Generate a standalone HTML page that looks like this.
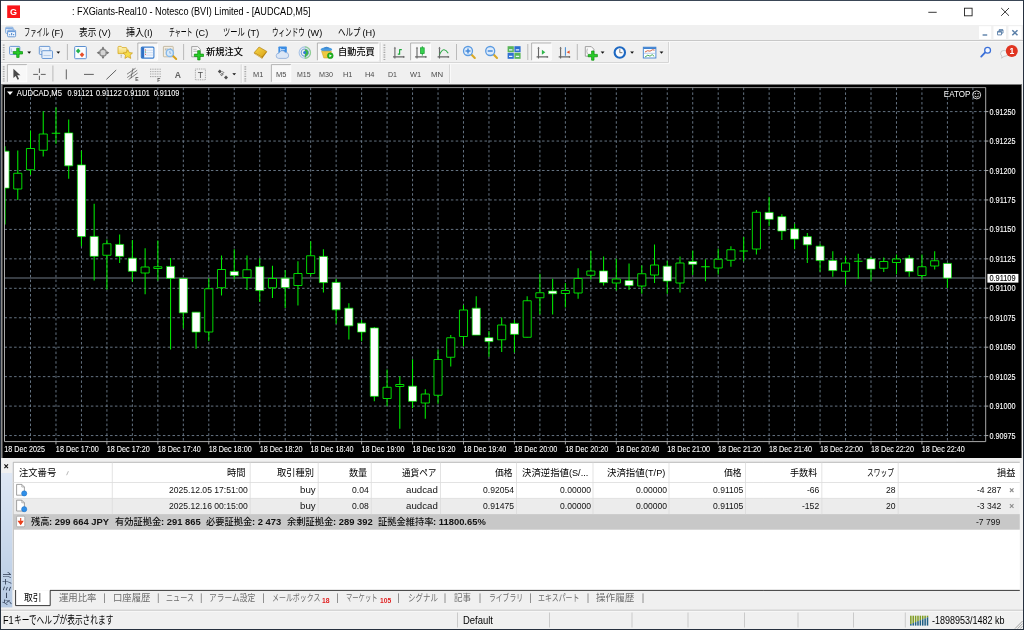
<!DOCTYPE html>
<html><head><meta charset="utf-8"><title>MT4</title>
<style>
html,body{margin:0;padding:0;}
body{width:1024px;height:630px;position:relative;overflow:hidden;background:#f0f0f0;font-family:"Liberation Sans", "Noto Sans CJK JP", sans-serif;}
.t{position:absolute;white-space:pre;display:block;will-change:transform;}
.t i{display:inline-block;font-style:normal;white-space:pre;vertical-align:baseline;}
.t b{display:inline-block;font-weight:inherit;transform-origin:0 50%;white-space:pre;}
svg{position:absolute;left:0;top:0;overflow:visible;will-change:transform}
svg text{font-family:"Liberation Sans", "Noto Sans CJK JP", sans-serif;}
</style></head><body>
<div style="position:absolute;left:0px;top:0px;width:1024px;height:24.7px;background:#ffffff;"></div>
<div style="position:absolute;left:0px;top:24.7px;width:1024px;height:15.8px;background:#f0f0f0;"></div>
<div style="position:absolute;left:0px;top:40.1px;width:1024px;height:1.0px;background:#c8c8c8;"></div>
<div style="position:absolute;left:0px;top:41.1px;width:1024px;height:0.7px;background:#f8f8f8;"></div>
<div style="position:absolute;left:0px;top:41.8px;width:1024px;height:42.2px;background:#f0f0f0;"></div>
<div style="position:absolute;left:0px;top:457px;width:1024px;height:173px;background:#f0f0f0;"></div>
<svg width="1024" height="630" viewBox="0 0 1024 630"><rect x="2.3" y="84.6" width="1019.3000000000001" height="373.4" fill="#000"/><path d="M4.5 111.60H985.7 M4.5 141.05H985.7 M4.5 170.50H985.7 M4.5 199.95H985.7 M4.5 229.40H985.7 M4.5 258.85H985.7 M4.5 288.30H985.7 M4.5 317.75H985.7 M4.5 347.20H985.7 M4.5 376.65H985.7 M4.5 406.10H985.7 M4.5 435.55H985.7 M30.50 87.6V441.6 M55.97 87.6V441.6 M81.44 87.6V441.6 M106.91 87.6V441.6 M132.38 87.6V441.6 M157.85 87.6V441.6 M183.32 87.6V441.6 M208.79 87.6V441.6 M234.26 87.6V441.6 M259.73 87.6V441.6 M285.20 87.6V441.6 M310.67 87.6V441.6 M336.14 87.6V441.6 M361.61 87.6V441.6 M387.08 87.6V441.6 M412.55 87.6V441.6 M438.02 87.6V441.6 M463.49 87.6V441.6 M488.96 87.6V441.6 M514.43 87.6V441.6 M539.90 87.6V441.6 M565.37 87.6V441.6 M590.84 87.6V441.6 M616.31 87.6V441.6 M641.78 87.6V441.6 M667.25 87.6V441.6 M692.72 87.6V441.6 M718.19 87.6V441.6 M743.66 87.6V441.6 M769.13 87.6V441.6 M794.60 87.6V441.6 M820.07 87.6V441.6 M845.54 87.6V441.6 M871.01 87.6V441.6 M896.48 87.6V441.6 M921.95 87.6V441.6 M947.42 87.6V441.6 M972.89 87.6V441.6" stroke="#778899" stroke-width="0.85" stroke-dasharray="2.5 2.3" fill="none"/><path d="M4.5 278H985.7" stroke="#7c8794" stroke-width="0.9" fill="none"/><clipPath id="cc"><rect x="4.5" y="87.6" width="981.2" height="354.0"/></clipPath><g clip-path="url(#cc)"><path d="M5.03 146.25V224.5 M17.77 150.5V200 M30.50 130.5V175 M43.23 111.25V156.5 M55.97 107.5V143.75 M51.72 133.25H60.22 M68.70 119.5V178.75 M81.44 150.75V246.25 M94.17 203.75V280.5 M106.91 239.5V289.5 M119.64 234.5V263 M132.38 240V281.5 M145.12 248.25V294.25 M157.85 240.5V280.5 M170.58 258V349.5 M183.32 278.5V328.25 M196.06 312.25V348.75 M208.79 278.25V341.25 M221.52 255.5V295.5 M234.26 249.25V279.5 M247.00 255.5V290 M259.73 258.25V302 M272.46 265.75V298 M285.20 270V308 M297.94 261.25V305.5 M310.67 241.25V275.75 M323.40 249.25V292.5 M336.14 278.75V323.75 M348.88 303.25V339.5 M361.61 320V341.25 M374.34 327V401.25 M387.08 369.5V406.25 M399.81 376.25V428.75 M412.55 359.25V408.25 M425.28 389.25V418.75 M438.02 349.5V403.75 M450.75 335V366.5 M463.49 305V346.5 M476.22 296.25V335 M488.96 331V356.75 M501.69 317.5V352 M514.43 320V352.5 M527.16 296.25V337.5 M539.90 273.75V314.5 M552.63 278.75V314.5 M565.37 283V307.5 M578.11 268.25V298.75 M590.84 250.75V279.5 M603.57 256.5V285.5 M616.31 258.75V290.5 M629.04 263.5V290 M641.78 265.5V293.75 M654.51 244.5V283 M667.25 260.75V293.75 M679.99 256.5V292.5 M692.72 250.5V275 M705.45 259.25V281.25 M701.20 266.75H709.70 M718.19 248.75V274.5 M730.92 246.25V266.75 M743.66 237V261.25 M739.41 251H747.91 M756.39 210V254.5 M769.13 196.75V226.25 M781.87 214.25V240 M794.60 223.75V249.25 M807.33 233V263 M820.07 243.75V271.75 M832.80 251.25V276.75 M845.54 256.25V285 M858.27 253.75V278.75 M854.02 261.25H862.52 M871.01 257V280.5 M883.75 257.5V272 M896.48 254.5V274.25 M909.21 255V276.75 M921.95 254.5V279.5 M934.68 251.25V269.5 M947.42 263.25V288" stroke="#00ee00" stroke-width="1.05" fill="none"/><path d="M13.71 173.25H21.82V189.0H13.71Z M26.45 148.5H34.55V169.75H26.45Z M39.19 134.0H47.28V150.25H39.19Z M102.86 243.75H110.96V255.25H102.86Z M141.06 267.0H149.17V273.0H141.06Z M153.80 266.75H161.90V268.5H153.80Z M204.74 288.75H212.84V332.0H204.74Z M217.47 269.5H225.57V287.75H217.47Z M242.94 269.75H251.05V277.5H242.94Z M268.41 278.5H276.51V287.75H268.41Z M293.88 273.5H301.99V285.5H293.88Z M306.62 255.75H314.72V273.5H306.62Z M383.03 387.25H391.13V398.5H383.03Z M395.76 384.5H403.87V386.5H395.76Z M421.23 394.0H429.33V403.0H421.23Z M433.97 359.5H442.07V395.25H433.97Z M446.70 337.75H454.81V357.25H446.70Z M459.44 310.0H467.54V336.5H459.44Z M497.64 325.0H505.75V339.75H497.64Z M523.12 300.75H531.21V337.25H523.12Z M535.85 292.75H543.95V297.75H535.85Z M561.32 290.5H569.42V293.5H561.32Z M574.06 278.5H582.15V293.0H574.06Z M586.79 271.0H594.89V275.25H586.79Z M612.26 279.0H620.36V283.0H612.26Z M637.73 273.75H645.83V286.0H637.73Z M650.47 265.0H658.56V275.0H650.47Z M675.94 263.0H684.03V283.0H675.94Z M714.14 259.25H722.24V268.0H714.14Z M726.88 249.75H734.97V260.25H726.88Z M752.35 212.25H760.44V249.0H752.35Z M841.49 263.0H849.59V271.25H841.49Z M879.70 261.5H887.79V268.25H879.70Z M892.43 259.0H900.53V262.5H892.43Z M917.90 266.75H926.00V275.5H917.90Z M930.63 260.75H938.73V266.0H930.63Z" stroke="#00ee00" stroke-width="0.9" fill="#000"/><path d="M0.98 151.15H9.08V188.1H0.98Z M64.66 132.9H72.75V165.85H64.66Z M77.39 164.9H85.49V236.6H77.39Z M90.12 236.4H98.22V256.35H90.12Z M115.59 244.4H123.69V256.35H115.59Z M128.33 258.15H136.43V271.35H128.33Z M166.53 266.4H174.63V278.35H166.53Z M179.27 278.4H187.37V312.85H179.27Z M192.00 312.15H200.11V332.1H192.00Z M230.21 271.4H238.31V275.6H230.21Z M255.68 266.65H263.78V290.6H255.68Z M281.15 278.15H289.25V287.6H281.15Z M319.35 256.4H327.45V282.6H319.35Z M332.09 282.4H340.19V309.85H332.09Z M344.82 308.15H352.93V325.85H344.82Z M357.56 323.15H365.66V332.1H357.56Z M370.29 327.9H378.39V396.35H370.29Z M408.50 386.15H416.60V401.35H408.50Z M472.17 308.15H480.27V335.1H472.17Z M484.91 337.65H493.01V341.6H484.91Z M510.38 323.4H518.48V334.35H510.38Z M548.59 291.0H556.68V293.75H548.59Z M599.52 270.9H607.62V282.6H599.52Z M625.00 280.4H633.09V285.6H625.00Z M663.20 266.15H671.30V281.1H663.20Z M688.67 261.5H696.77V264.25H688.67Z M765.08 212.4H773.18V219.35H765.08Z M777.82 216.65H785.91V231.1H777.82Z M790.55 228.9H798.65V239.1H790.55Z M803.28 236.65H811.38V244.85H803.28Z M816.02 246.15H824.12V260.6H816.02Z M828.75 260.4H836.85V270.6H828.75Z M866.96 258.9H875.06V269.1H866.96Z M905.16 258.15H913.26V271.6H905.16Z M943.37 263.4H951.47V278.1H943.37Z" stroke="#00ee00" stroke-width="0.7" fill="#fff"/></g><path d="M4.5 87.6H985.7" stroke="#a8a8a8" stroke-width="0.85" fill="none"/><path d="M4.5 87.6V441.6H985.7V87.6 M985.7 111.60h2.6 M985.7 141.05h2.6 M985.7 170.50h2.6 M985.7 199.95h2.6 M985.7 229.40h2.6 M985.7 258.85h2.6 M985.7 288.30h2.6 M985.7 317.75h2.6 M985.7 347.20h2.6 M985.7 376.65h2.6 M985.7 406.10h2.6 M985.7 435.55h2.6 M55.97 441.6v2.8 M106.91 441.6v2.8 M157.85 441.6v2.8 M208.79 441.6v2.8 M259.73 441.6v2.8 M310.67 441.6v2.8 M361.61 441.6v2.8 M412.55 441.6v2.8 M463.49 441.6v2.8 M514.43 441.6v2.8 M565.37 441.6v2.8 M616.31 441.6v2.8 M667.25 441.6v2.8 M718.19 441.6v2.8 M769.13 441.6v2.8 M820.07 441.6v2.8 M871.01 441.6v2.8 M921.95 441.6v2.8" stroke="#c8c8c8" stroke-width="0.85" fill="none"/><text x="989.4" y="114.65" font-size="8.5" fill="#fff" stroke="#fff" stroke-width="0.1" textLength="26.2" lengthAdjust="spacingAndGlyphs">0.91250</text><text x="989.4" y="144.10" font-size="8.5" fill="#fff" stroke="#fff" stroke-width="0.1" textLength="26.2" lengthAdjust="spacingAndGlyphs">0.91225</text><text x="989.4" y="173.55" font-size="8.5" fill="#fff" stroke="#fff" stroke-width="0.1" textLength="26.2" lengthAdjust="spacingAndGlyphs">0.91200</text><text x="989.4" y="203.00" font-size="8.5" fill="#fff" stroke="#fff" stroke-width="0.1" textLength="26.2" lengthAdjust="spacingAndGlyphs">0.91175</text><text x="989.4" y="232.45" font-size="8.5" fill="#fff" stroke="#fff" stroke-width="0.1" textLength="26.2" lengthAdjust="spacingAndGlyphs">0.91150</text><text x="989.4" y="261.90" font-size="8.5" fill="#fff" stroke="#fff" stroke-width="0.1" textLength="26.2" lengthAdjust="spacingAndGlyphs">0.91125</text><text x="989.4" y="291.35" font-size="8.5" fill="#fff" stroke="#fff" stroke-width="0.1" textLength="26.2" lengthAdjust="spacingAndGlyphs">0.91100</text><text x="989.4" y="320.80" font-size="8.5" fill="#fff" stroke="#fff" stroke-width="0.1" textLength="26.2" lengthAdjust="spacingAndGlyphs">0.91075</text><text x="989.4" y="350.25" font-size="8.5" fill="#fff" stroke="#fff" stroke-width="0.1" textLength="26.2" lengthAdjust="spacingAndGlyphs">0.91050</text><text x="989.4" y="379.70" font-size="8.5" fill="#fff" stroke="#fff" stroke-width="0.1" textLength="26.2" lengthAdjust="spacingAndGlyphs">0.91025</text><text x="989.4" y="409.15" font-size="8.5" fill="#fff" stroke="#fff" stroke-width="0.1" textLength="26.2" lengthAdjust="spacingAndGlyphs">0.91000</text><text x="989.4" y="438.60" font-size="8.5" fill="#fff" stroke="#fff" stroke-width="0.1" textLength="26.2" lengthAdjust="spacingAndGlyphs">0.90975</text><text x="4.30" y="452.1" font-size="8.5" fill="#fff" stroke="#fff" stroke-width="0.08" textLength="40.6" lengthAdjust="spacingAndGlyphs">18 Dec 2025</text><text x="55.87" y="452.1" font-size="8.5" fill="#fff" stroke="#fff" stroke-width="0.08" textLength="43" lengthAdjust="spacingAndGlyphs">18 Dec 17:00</text><text x="106.81" y="452.1" font-size="8.5" fill="#fff" stroke="#fff" stroke-width="0.08" textLength="43" lengthAdjust="spacingAndGlyphs">18 Dec 17:20</text><text x="157.75" y="452.1" font-size="8.5" fill="#fff" stroke="#fff" stroke-width="0.08" textLength="43" lengthAdjust="spacingAndGlyphs">18 Dec 17:40</text><text x="208.69" y="452.1" font-size="8.5" fill="#fff" stroke="#fff" stroke-width="0.08" textLength="43" lengthAdjust="spacingAndGlyphs">18 Dec 18:00</text><text x="259.63" y="452.1" font-size="8.5" fill="#fff" stroke="#fff" stroke-width="0.08" textLength="43" lengthAdjust="spacingAndGlyphs">18 Dec 18:20</text><text x="310.57" y="452.1" font-size="8.5" fill="#fff" stroke="#fff" stroke-width="0.08" textLength="43" lengthAdjust="spacingAndGlyphs">18 Dec 18:40</text><text x="361.51" y="452.1" font-size="8.5" fill="#fff" stroke="#fff" stroke-width="0.08" textLength="43" lengthAdjust="spacingAndGlyphs">18 Dec 19:00</text><text x="412.45" y="452.1" font-size="8.5" fill="#fff" stroke="#fff" stroke-width="0.08" textLength="43" lengthAdjust="spacingAndGlyphs">18 Dec 19:20</text><text x="463.39" y="452.1" font-size="8.5" fill="#fff" stroke="#fff" stroke-width="0.08" textLength="43" lengthAdjust="spacingAndGlyphs">18 Dec 19:40</text><text x="514.33" y="452.1" font-size="8.5" fill="#fff" stroke="#fff" stroke-width="0.08" textLength="43" lengthAdjust="spacingAndGlyphs">18 Dec 20:00</text><text x="565.27" y="452.1" font-size="8.5" fill="#fff" stroke="#fff" stroke-width="0.08" textLength="43" lengthAdjust="spacingAndGlyphs">18 Dec 20:20</text><text x="616.21" y="452.1" font-size="8.5" fill="#fff" stroke="#fff" stroke-width="0.08" textLength="43" lengthAdjust="spacingAndGlyphs">18 Dec 20:40</text><text x="667.15" y="452.1" font-size="8.5" fill="#fff" stroke="#fff" stroke-width="0.08" textLength="43" lengthAdjust="spacingAndGlyphs">18 Dec 21:00</text><text x="718.09" y="452.1" font-size="8.5" fill="#fff" stroke="#fff" stroke-width="0.08" textLength="43" lengthAdjust="spacingAndGlyphs">18 Dec 21:20</text><text x="769.03" y="452.1" font-size="8.5" fill="#fff" stroke="#fff" stroke-width="0.08" textLength="43" lengthAdjust="spacingAndGlyphs">18 Dec 21:40</text><text x="819.97" y="452.1" font-size="8.5" fill="#fff" stroke="#fff" stroke-width="0.08" textLength="43" lengthAdjust="spacingAndGlyphs">18 Dec 22:00</text><text x="870.91" y="452.1" font-size="8.5" fill="#fff" stroke="#fff" stroke-width="0.08" textLength="43" lengthAdjust="spacingAndGlyphs">18 Dec 22:20</text><text x="921.85" y="452.1" font-size="8.5" fill="#fff" stroke="#fff" stroke-width="0.08" textLength="43" lengthAdjust="spacingAndGlyphs">18 Dec 22:40</text><rect x="987.4" y="273.9" width="31" height="8.7" fill="#fff"/><text x="989.4" y="281.35" font-size="8.5" fill="#000" stroke="#000" stroke-width="0.1" textLength="26.2" lengthAdjust="spacingAndGlyphs">0.91109</text><path d="M7 91.6h6l-3 3.4z" fill="#fff"/><text x="16.8" y="96.4" font-size="8.5" fill="#fff" stroke="#fff" stroke-width="0.08" textLength="45.1" lengthAdjust="spacingAndGlyphs">AUDCAD,M5</text><text x="67.5" y="96.4" font-size="8.5" fill="#fff" stroke="#fff" stroke-width="0.08" textLength="25.8" lengthAdjust="spacingAndGlyphs">0.91121</text><text x="95.9" y="96.4" font-size="8.5" fill="#fff" stroke="#fff" stroke-width="0.08" textLength="25.8" lengthAdjust="spacingAndGlyphs">0.91122</text><text x="124.1" y="96.4" font-size="8.5" fill="#fff" stroke="#fff" stroke-width="0.08" textLength="25.8" lengthAdjust="spacingAndGlyphs">0.91101</text><text x="153.7" y="96.4" font-size="8.5" fill="#fff" stroke="#fff" stroke-width="0.08" textLength="25.6" lengthAdjust="spacingAndGlyphs">0.91109</text><text x="943.8" y="97.3" font-size="8.5" fill="#fff" textLength="26.5" lengthAdjust="spacingAndGlyphs">EATOP</text><circle cx="976.7" cy="94.9" r="4.0" fill="none" stroke="#e8e8e8" stroke-width="0.9"/><circle cx="975.3" cy="93.7" r="0.65" fill="#fff"/><circle cx="978.1" cy="93.7" r="0.65" fill="#fff"/><path d="M974.5 96q2.2 2.2 4.4 0" stroke="#fff" stroke-width="0.8" fill="none"/></svg>
<div style="position:absolute;left:1.1px;top:84px;width:1021.3px;height:0.9px;background:#7a7a7a;"></div>
<div style="position:absolute;left:1.1px;top:84px;width:1.2px;height:374px;background:#8a8a8a;"></div>
<svg width="1024" height="630" viewBox="0 0 1024 630"><rect x="7.2" y="5.4" width="12.8" height="12.6" fill="#fb1519"/><text x="13.6" y="15.1" font-size="9" font-weight="bold" fill="#fff" text-anchor="middle">G</text><path d="M928.3 12.3h8.4" stroke="#222" stroke-width="0.9"/><rect x="964.5" y="8.2" width="7.6" height="7.6" fill="none" stroke="#222" stroke-width="0.9"/><path d="M1001.2 8l7.8 7.8M1009 8l-7.8 7.8" stroke="#222" stroke-width="0.9" fill="none"/><rect x="5.6" y="27.2" width="7.6" height="6.2" rx="1" fill="#e4eefb" stroke="#6f9fd8" stroke-width="0.8"/><path d="M6 28.4h6.8" stroke="#7fa9e0" stroke-width="1.2"/><rect x="7.6" y="30.2" width="8" height="6.6" rx="1" fill="#f4f9ff" stroke="#5b90d0" stroke-width="0.9"/><path d="M8 31.5h7.2" stroke="#6b9ddc" stroke-width="1.3"/><path d="M9 34.2h1.2v1h-1.2zM11 33h1.2v2.2h-1.2zM13 34h1.2v1.2h-1.2z" fill="#5b90d0"/><rect x="979" y="26.2" width="12.200000000000045" height="12.8" fill="#fff"/><rect x="993.5" y="26.2" width="12.5" height="12.8" fill="#fff"/><rect x="1008.5" y="26.2" width="13.0" height="12.8" fill="#fff"/><path d="M982.6 35h4.6" stroke="#5a7fa8" stroke-width="1.4"/><path d="M997.5 31.5h4v3.4h-4zM999 31.5v-1.7h4v3.3h-1.5" stroke="#5a7fa8" stroke-width="0.9" fill="none"/><path d="M997.5 32h4M999 30.2h4" stroke="#5a7fa8" stroke-width="1.2"/><path d="M1012.3 30.3l5.2 5M1017.5 30.3l-5.2 5" stroke="#5a7fa8" stroke-width="1.5" fill="none"/><path d="M0 62.5H668.5V42" stroke="#c4c4c4" stroke-width="0.8" fill="none"/><path d="M0 63.3H669.3V42" stroke="#fff" stroke-width="0.8" fill="none"/><path d="M380.3 42.5V62" stroke="#c4c4c4" stroke-width="0.8" fill="none"/><path d="M381.1 42.5V62" stroke="#fff" stroke-width="0.8"/><path d="M449.5 64.5V83" stroke="#c4c4c4" stroke-width="0.8" fill="none"/><path d="M450.3 64.5V83" stroke="#fff" stroke-width="0.8"/><path d="M241.3 64.5V83" stroke="#c4c4c4" stroke-width="0.8" fill="none"/><path d="M242.1 64.5V83" stroke="#fff" stroke-width="0.8"/><path d="M3.7 44.6V60" stroke="#a8a8a8" stroke-width="1.8" stroke-dasharray="1.2 1.2"/><path d="M3.7 66.2V81.5" stroke="#a8a8a8" stroke-width="1.8" stroke-dasharray="1.2 1.2"/><path d="M384.4 44.6V60" stroke="#a8a8a8" stroke-width="1.8" stroke-dasharray="1.2 1.2"/><path d="M245.3 66.2V81.5" stroke="#a8a8a8" stroke-width="1.8" stroke-dasharray="1.2 1.2"/><path d="M67.4 44V60" stroke="#b4b4b4" stroke-width="0.9"/><path d="M183.6 44V60" stroke="#b4b4b4" stroke-width="0.9"/><path d="M456.5 44V60" stroke="#b4b4b4" stroke-width="0.9"/><path d="M527.8 44V60" stroke="#b4b4b4" stroke-width="0.9"/><path d="M577.3 44V60" stroke="#b4b4b4" stroke-width="0.9"/><path d="M52.9 65.5V81.5" stroke="#b4b4b4" stroke-width="0.9"/><rect x="137.8" y="43" width="19.599999999999994" height="17.200000000000003" fill="#f8f8f8"/><path d="M137.8 60.2V43H157.4" fill="none" stroke="#a4a4a4" stroke-width="0.8"/><path d="M157.4 43.6V60.2H138.4" fill="none" stroke="#ffffff" stroke-width="0.8"/><rect x="317.4" y="43" width="61.0" height="17.200000000000003" fill="#f8f8f8"/><path d="M317.4 60.2V43H378.4" fill="none" stroke="#a4a4a4" stroke-width="0.8"/><path d="M378.4 43.6V60.2H318.0" fill="none" stroke="#ffffff" stroke-width="0.8"/><rect x="410.6" y="43" width="19.799999999999955" height="17.200000000000003" fill="#f8f8f8"/><path d="M410.6 60.2V43H430.4" fill="none" stroke="#a4a4a4" stroke-width="0.8"/><path d="M430.4 43.6V60.2H411.20000000000005" fill="none" stroke="#ffffff" stroke-width="0.8"/><rect x="531.6" y="43" width="19.600000000000023" height="17.200000000000003" fill="#f8f8f8"/><path d="M531.6 60.2V43H551.2" fill="none" stroke="#a4a4a4" stroke-width="0.8"/><path d="M551.2 43.6V60.2H532.2" fill="none" stroke="#ffffff" stroke-width="0.8"/><rect x="7.4" y="64.6" width="19.4" height="17.200000000000003" fill="#f8f8f8"/><path d="M7.4 81.8V64.6H26.8" fill="none" stroke="#a4a4a4" stroke-width="0.8"/><path d="M26.8 65.19999999999999V81.8H8.0" fill="none" stroke="#ffffff" stroke-width="0.8"/><rect x="271.4" y="64.6" width="19.400000000000034" height="17.200000000000003" fill="#f8f8f8"/><path d="M271.4 81.8V64.6H290.8" fill="none" stroke="#a4a4a4" stroke-width="0.8"/><path d="M290.8 65.19999999999999V81.8H272.0" fill="none" stroke="#ffffff" stroke-width="0.8"/><path d="M27.3 51.6h3.8l-1.9 2.1z" fill="#111"/><path d="M56.4 51.6h3.8l-1.9 2.1z" fill="#111"/><path d="M600.7 51.6h3.8l-1.9 2.1z" fill="#111"/><path d="M630.2 51.6h3.8l-1.9 2.1z" fill="#111"/><path d="M659.6 51.6h3.8l-1.9 2.1z" fill="#111"/><path d="M232.29999999999998 73.2h3.8l-1.9 2.1z" fill="#111"/><rect x="9.6" y="46.4" width="10.2" height="8" rx="0.8" fill="#eef4fc" stroke="#5b8fd0" stroke-width="0.9"/><path d="M11.3 48.5v3.2M11.3 51.7h3" stroke="#7d9cc0" stroke-width="0.6" fill="none"/><path d="M16.7 48.199999999999996h2.4v3.3999999999999995h3.3999999999999995v2.4h-3.3999999999999995v3.3999999999999995h-2.4v-3.3999999999999995h-3.3999999999999995v-2.4h3.3999999999999995z" fill="#28cc28" stroke="#0a8f0a" stroke-width="0.7"/><rect x="39.3" y="46.4" width="10.6" height="8" rx="0.8" fill="#eef4fc" stroke="#5b8fd0" stroke-width="0.9"/><path d="M41 48.3v3.4h6.5" stroke="#7d9cc0" stroke-width="0.6" fill="none"/><rect x="41.9" y="50.7" width="10.6" height="7.8" rx="0.8" fill="#e4eefa" stroke="#5b8fd0" stroke-width="0.9"/><path d="M43.5 55.5h7" stroke="#9bb6d8" stroke-width="0.6"/><rect x="74.7" y="46.5" width="11.6" height="12.2" rx="0.8" fill="#fbfdff" stroke="#5b8fd0" stroke-width="1"/><path d="M78.2 48.4l2.3 2.5-2.3 2.5-2.3-2.5z" fill="#22b14c"/><path d="M82 52.2l2.3 2.5-2.3 2.5-2.3-2.5z" fill="#e8502a"/><circle cx="103" cy="52.7" r="3.3" fill="#d4d4d4" stroke="#8a8a8a" stroke-width="1.4"/><path d="M103 46.4l1.5 2.3h-3zM103 59l1.5-2.3h-3zM96.7 52.7l2.3-1.5v3zM109.3 52.7l-2.3-1.5v3z" fill="#707070"/><path d="M103 47.5v2.4M103 55.5v2.4M97.8 52.7h2.4M105.8 52.7h2.4" stroke="#777" stroke-width="1.1"/><defs><linearGradient id="fo" x1="0" y1="0" x2="0" y2="1"><stop offset="0" stop-color="#fff6c4"/><stop offset="1" stop-color="#f2d560"/></linearGradient></defs><path d="M118 47.2q0-.8.8-.8h2.4l1 1.2h3.8q.8 0 .8.8v5.2H118z" fill="url(#fo)" stroke="#d6a820" stroke-width="0.8"/><path d="M121.2 54.8v3.4" stroke="#666" stroke-width="0.7" stroke-dasharray="1 0.7"/><path d="M127.8 49.6l1.5 3 3.2.4-2.4 2.2.65 3.2-2.95-1.6-2.9 1.6.6-3.2-2.4-2.2 3.2-.4z" fill="#f6dc48" stroke="#c9981a" stroke-width="0.7"/><rect x="141.3" y="47.1" width="12.6" height="11" rx="1" fill="#f4f8fe" stroke="#3a7ecf" stroke-width="1.1"/><rect x="141.5" y="47.3" width="2.7" height="10.6" fill="#2f70c4"/><path d="M145.6 50.3h7.6M145.6 52.7h7.6M145.6 55.1h7.6" stroke="#c4d6f0" stroke-width="0.8"/><path d="M145 49.4h1v1h-1z" fill="#e04848"/><path d="M145 51.6h1v1h-1z" fill="#3fa04a"/><path d="M145 53.8h1v1h-1z" fill="#e04848"/><rect x="163.4" y="46.4" width="9.8" height="10.4" rx="0.6" fill="#f3eee2" stroke="#b9ad93" stroke-width="0.8"/><path d="M165.4 48.4v2M167 48.2v2.4M170.6 48.2v2" stroke="#8a8a8a" stroke-width="0.6"/><path d="M172.6 55.6l3.6 3.4" stroke="#d8a21c" stroke-width="2" stroke-linecap="round"/><circle cx="169.8" cy="52.9" r="3.6" fill="#d6e9fa" stroke="#86b9ea" stroke-width="1.4"/><path d="M169.8 51v2.2h1.4" stroke="#7d9fc4" stroke-width="0.7" fill="none"/><path d="M191.7 46.6h6l2.6 2.6v7.6h-8.6z" fill="#fafafa" stroke="#8c8c8c" stroke-width="0.8"/><path d="M193.3 49.3h3.4M193.3 51.3h4.8" stroke="#999" stroke-width="0.7"/><path d="M197.70000000000002 50.699999999999996h2.4v3.3999999999999995h3.3999999999999995v2.4h-3.3999999999999995v3.3999999999999995h-2.4v-3.3999999999999995h-3.3999999999999995v-2.4h3.3999999999999995z" fill="#28cc28" stroke="#0a8f0a" stroke-width="0.7"/><defs><linearGradient id="gd" x1="0" y1="0" x2="1" y2="1"><stop offset="0" stop-color="#f7d84a"/><stop offset="1" stop-color="#d9a116"/></linearGradient></defs><path d="M253.9 53.6l5-6.2 8 4.6-4.8 6.8z" fill="#b98514"/><path d="M254.2 52.6l4.9-5.6 7.7 4.4-4.9 5.8z" fill="url(#gd)" stroke="#a9780f" stroke-width="0.6"/><path d="M254.6 53.6l7 4" stroke="#f4dc90" stroke-width="0.7"/><rect x="278.4" y="46.4" width="8.4" height="7" rx="0.8" fill="#3b8de4"/><path d="M280.6 48.2v3M280.6 49.6h4.2" stroke="#cfe4fb" stroke-width="0.9"/><path d="M278.6 58.4a2.6 2.6 0 0 1 0.4-5.2a3.4 3.4 0 0 1 6.2-.8a2.9 2.9 0 0 1 0.9 6z" fill="#dce7f6" stroke="#7fa3d6" stroke-width="0.7"/><circle cx="304.8" cy="52.6" r="5.7" fill="none" stroke="#a9c4e6" stroke-width="1.1"/><circle cx="304.8" cy="52.6" r="3.6" fill="none" stroke="#6d9fde" stroke-width="1.1"/><path d="M304.8 46.9a5.7 5.7 0 0 1 0 11.4" fill="none" stroke="#8fcf8f" stroke-width="1.2"/><path d="M304.8 49a3.6 3.6 0 0 1 2 6.6l-2 2.6z" fill="#3cb44a"/><circle cx="304.6" cy="52.4" r="1.5" fill="#2f7bd6"/><ellipse cx="326.4" cy="49.4" rx="5.8" ry="2.1" fill="#4a9be0"/><path d="M323.6 48.6a3 2.6 0 0 1 5.8 0z" fill="#3b86d0"/><path d="M321.6 51.2h9.8l-1.2 6.8h-6.4z" fill="#f0c840" stroke="#c99a1a" stroke-width="0.5"/><circle cx="330.3" cy="55.7" r="2.9" fill="#22b422" stroke="#0e8a0e" stroke-width="0.5"/><path d="M329.4 54.2l2.4 1.5-2.4 1.5z" fill="#fff"/><path d="M394.9 48.3V58.5M393 56.9H404.2" stroke="#666" stroke-width="1.1" fill="none"/><path d="M394.9 46.699999999999996l1.2 1.8h-2.4zM405.0 56.9l-1.8 1.2v-2.4z" fill="#666"/><path d="M399.6 49.2v5.6M399.6 49.6h2.2M397.8 54.2h1.8" stroke="#1ea83a" stroke-width="1.2" fill="none"/><path d="M417.0 48.3V58.5M415.1 56.9H426.3" stroke="#666" stroke-width="1.1" fill="none"/><path d="M417.0 46.699999999999996l1.2 1.8h-2.4zM427.1 56.9l-1.8 1.2v-2.4z" fill="#666"/><path d="M422.3 46.2v9.4" stroke="#1ea83a" stroke-width="0.9"/><rect x="420.5" y="47.8" width="3.7" height="5.8" fill="#36d24e" stroke="#159a2c" stroke-width="0.7"/><path d="M439.5 48.3V58.5M437.6 56.9H448.8" stroke="#666" stroke-width="1.1" fill="none"/><path d="M439.5 46.699999999999996l1.2 1.8h-2.4zM449.6 56.9l-1.8 1.2v-2.4z" fill="#666"/><path d="M439.6 54.4q4-8.6 8.6-1.2" stroke="#2eaa48" stroke-width="1.1" fill="none"/><path d="M471.4 54.6l3.4 3.4" stroke="#d8a928" stroke-width="2.1" stroke-linecap="round"/><circle cx="468" cy="51" r="4.5" fill="#dcebfb" stroke="#5b9be2" stroke-width="1.3"/><path d="M465.5 51h5" stroke="#3f86d8" stroke-width="1.4"/><path d="M468 48.5v5" stroke="#3f86d8" stroke-width="1.4"/><path d="M493.59999999999997 54.6l3.4 3.4" stroke="#d8a928" stroke-width="2.1" stroke-linecap="round"/><circle cx="490.2" cy="51" r="4.5" fill="#dcebfb" stroke="#5b9be2" stroke-width="1.3"/><path d="M487.7 51h5" stroke="#3f86d8" stroke-width="1.4"/><rect x="507.6" y="46.2" width="6.2" height="6" fill="#59b559"/><rect x="514.4" y="46.2" width="6.2" height="6" fill="#2f6fd0"/><rect x="507.6" y="52.8" width="6.2" height="6" fill="#2f6fd0"/><rect x="514.4" y="52.8" width="6.2" height="6" fill="#59b559"/><path d="M509 49.8h3.4M515.8 49.8h3.4M509 56.4h3.4M515.8 56.4h3.4" stroke="#e8f4ff" stroke-width="1.2"/><path d="M538.5 48.3V58.5M536.6 56.9H547.8000000000001" stroke="#666" stroke-width="1.1" fill="none"/><path d="M538.5 46.699999999999996l1.2 1.8h-2.4zM548.6 56.9l-1.8 1.2v-2.4z" fill="#666"/><path d="M541.9 49.8l3.4 2.5-3.4 2.5z" fill="#2fb64a"/><path d="M560.6 48.3V58.5M558.7 56.9H569.9000000000001" stroke="#666" stroke-width="1.1" fill="none"/><path d="M560.6 46.699999999999996l1.2 1.8h-2.4zM570.7 56.9l-1.8 1.2v-2.4z" fill="#666"/><path d="M565.4 47.2v8.6" stroke="#2f7fd0" stroke-width="0.9"/><path d="M569.6 50.6v3.2l-3-1.6z" fill="#e0502a"/><path d="M585.3 46.6h6l2.6 2.6v7h-8.6z" fill="#fafafa" stroke="#8c8c8c" stroke-width="0.8"/><path d="M587.4 48.6q-1.2 3 0 5.4" stroke="#888" stroke-width="0.6" fill="none"/><path d="M591.5999999999999 51.0h2.4v3.3999999999999995h3.3999999999999995v2.4h-3.3999999999999995v3.3999999999999995h-2.4v-3.3999999999999995h-3.3999999999999995v-2.4h3.3999999999999995z" fill="#28cc28" stroke="#0a8f0a" stroke-width="0.7"/><circle cx="619.8" cy="52.5" r="5.2" fill="#fbfcfe" stroke="#1d68c2" stroke-width="2.1"/><path d="M619.8 49.2v3.5h2.6" stroke="#555" stroke-width="0.8" fill="none"/><rect x="643.3" y="47.2" width="12.6" height="10.8" fill="#fbfdff" stroke="#3f82d0" stroke-width="0.9"/><rect x="643.3" y="47.2" width="12.6" height="1.8" fill="#3f82d0"/><path d="M644 53.3h11.4" stroke="#9dbce6" stroke-width="0.7"/><path d="M645 52l2.6-1.3 2.4.5 2.4-1.4 2.2.3" stroke="#d0522c" stroke-width="0.9" fill="none"/><path d="M645 57l2.8-1.8 2.2 1 2.2-1.6 2 1.8" stroke="#3ba64a" stroke-width="0.9" fill="none"/><path d="M981.2 56.6l4-4.2" stroke="#3a6fd8" stroke-width="1.8" stroke-linecap="round"/><circle cx="987.6" cy="50.2" r="2.9" fill="#f4f8ff" stroke="#3a6fd8" stroke-width="1.3"/><path d="M1000.6 53.4a3.6 3 0 1 1 3.4 3l-2.4 1.8.4-2.2a3.4 3 0 0 1-1.4-2.6z" fill="#f4f4f4" stroke="#b8b8b8" stroke-width="0.7"/><circle cx="1011.8" cy="51" r="6" fill="#e03420"/><text x="1011.8" y="54.2" font-size="8.6" font-weight="bold" fill="#fff" text-anchor="middle">1</text><path d="M13.4 68.8v9.2l2.3-2.1 1.9 3.9 1.5-.7-1.9-3.8h3.2z" fill="#4a4a4a"/><path d="M39.4 68.4v4.6M39.4 75.8v4.2M33.2 74.4h4.9M40.8 74.4h4.9" stroke="#505050" stroke-width="0.9"/><path d="M66.3 69.4v10" stroke="#505050" stroke-width="0.9"/><path d="M84 74.4h9.8" stroke="#505050" stroke-width="0.9"/><path d="M106.4 79.4l9.8-9.4" stroke="#505050" stroke-width="0.9"/><path d="M127.2 77.6l10-7.4M128.6 79.6l9-6.6M127 74.2l8.6-6M133 68.2l-2 10" stroke="#505050" stroke-width="0.7" fill="none"/><text x="135.2" y="81.4" font-size="5" font-weight="bold" fill="#505050">E</text><path d="M150 69.2h11M150 71.6h11M150 74h11" stroke="#888" stroke-width="0.7" stroke-dasharray="1 0.7"/><path d="M150 76.6h11" stroke="#777" stroke-width="0.7" stroke-dasharray="1 0.7"/><text x="157.2" y="81.6" font-size="5" font-weight="bold" fill="#505050">F</text><text x="177.9" y="77.6" font-size="8.6" font-weight="bold" fill="#606060" text-anchor="middle">A</text><rect x="195.4" y="69" width="10" height="10.8" fill="none" stroke="#888" stroke-width="0.7" stroke-dasharray="1 0.8"/><text x="200.4" y="78" font-size="8.6" fill="#505050" text-anchor="middle" font-family="Liberation Serif,serif">T</text><path d="M217.8 71.6l2-2 2 2-2 2zM224 77.6l2-2 2 2-2 2z" fill="#505050"/><path d="M220.6 74.6l1.8-1.4.9 1-1.8 1.4zM222.6 71.4l1.4 1.4" stroke="#505050" stroke-width="0.9" fill="none"/></svg>
<svg width="1024" height="630" viewBox="0 0 1024 630"><defs><linearGradient id="sb" x1="0" y1="0" x2="0" y2="1"><stop offset="0" stop-color="#e2eaf6"/><stop offset="1" stop-color="#b6cae3"/></linearGradient></defs><rect x="1.1" y="462" width="11.2" height="145.4" fill="url(#sb)"/><rect x="1.1" y="458" width="11.2" height="15" fill="#f0f0f0"/><path d="M4.4 464.4l3.6 3.8M8 464.4l-3.6 3.8" stroke="#111" stroke-width="1.1"/><rect x="13.3" y="462.2" width="1006.5" height="128" fill="#fff"/><path d="M13.3 590.3V462.3H1019.8" stroke="#a8a8a8" stroke-width="0.8" fill="none"/><rect x="13.700000000000001" y="498.4" width="1006.1" height="15.8" fill="#ececec"/><rect x="13.700000000000001" y="514.1" width="1006.1" height="15.6" fill="#c8c8c8"/><path d="M13.3 482.5H1019.8 M13.3 498.4H1019.8 M112.3 462.6V514.3 M250.2 462.6V514.3 M318.2 462.6V514.3 M371.3 462.6V514.3 M440.5 462.6V514.3 M516.5 462.6V514.3 M593 462.6V514.3 M669 462.6V514.3 M745.5 462.6V514.3 M821.8 462.6V514.3 M898.2 462.6V514.3" stroke="#dcdcdc" stroke-width="0.8" fill="none"/><path d="M66.6 475.2l1.8-4" stroke="#999" stroke-width="0.7"/><path d="M16.6 484.4h5.2l2.6 2.6v8.2h-7.8z" fill="#fff" stroke="#8a8a8a" stroke-width="0.8"/><path d="M21.8 484.4v2.6h2.6" fill="none" stroke="#8a8a8a" stroke-width="0.6"/><circle cx="24.2" cy="493.4" r="2.6" fill="#2f8fe8" stroke="#1c6cc0" stroke-width="0.5"/><path d="M1009.9 488.4l3.6 3.6M1013.5 488.4l-3.6 3.6" stroke="#8c8c8c" stroke-width="1.1"/><path d="M16.6 500.2h5.2l2.6 2.6v8.2h-7.8z" fill="#fff" stroke="#8a8a8a" stroke-width="0.8"/><path d="M21.8 500.2v2.6h2.6" fill="none" stroke="#8a8a8a" stroke-width="0.6"/><circle cx="24.2" cy="509.2" r="2.6" fill="#2f8fe8" stroke="#1c6cc0" stroke-width="0.5"/><path d="M1009.9 504.2l3.6 3.6M1013.5 504.2l-3.6 3.6" stroke="#8c8c8c" stroke-width="1.1"/><rect x="16.6" y="516.2" width="8.2" height="10.6" rx="1" fill="#fff" stroke="#999" stroke-width="0.7"/><path d="M20.7 518v4.4M18.6 521.4l2.1 3 2.1-3z" fill="#e8401c" stroke="#e8401c" stroke-width="1.1"/><rect x="13.3" y="590.2" width="1006.5" height="17" fill="#f0f0f0"/><path d="M50 590.4H1019.8" stroke="#222" stroke-width="0.9"/><path d="M15.6 590V605.6H50.2V590.4" fill="#fff" stroke="#222" stroke-width="0.9"/><path d="M104.5 593.4V603" stroke="#777" stroke-width="0.8"/><path d="M158.3 593.4V603" stroke="#777" stroke-width="0.8"/><path d="M201.3 593.4V603" stroke="#777" stroke-width="0.8"/><path d="M263.5 593.4V603" stroke="#777" stroke-width="0.8"/><path d="M337.5 593.4V603" stroke="#777" stroke-width="0.8"/><path d="M398.5 593.4V603" stroke="#777" stroke-width="0.8"/><path d="M445 593.4V603" stroke="#777" stroke-width="0.8"/><path d="M480 593.4V603" stroke="#777" stroke-width="0.8"/><path d="M530.5 593.4V603" stroke="#777" stroke-width="0.8"/><path d="M588 593.4V603" stroke="#777" stroke-width="0.8"/><path d="M643 593.4V603" stroke="#777" stroke-width="0.8"/><text transform="translate(10.6 605.6) rotate(-90)" font-size="10.4" fill="#2c3a52" textLength="34" lengthAdjust="spacingAndGlyphs">ターミナル</text><path d="M0 610.3H1024" stroke="#a6a6a6" stroke-width="0.8"/><path d="M0 611.1H1024" stroke="#fff" stroke-width="0.8"/><path d="M1015 628.6l7.6-7.6M1017.6 628.6l5-5M1020.2 628.6l2.4-2.4" stroke="#9a9a9a" stroke-width="0.9"/><path d="M457.5 612.5V627.5" stroke="#c0c0c0" stroke-width="0.8"/><path d="M549.5 612.5V627.5" stroke="#c0c0c0" stroke-width="0.8"/><path d="M632 612.5V627.5" stroke="#c0c0c0" stroke-width="0.8"/><path d="M688 612.5V627.5" stroke="#c0c0c0" stroke-width="0.8"/><path d="M744.5 612.5V627.5" stroke="#c0c0c0" stroke-width="0.8"/><path d="M798 612.5V627.5" stroke="#c0c0c0" stroke-width="0.8"/><path d="M853.5 612.5V627.5" stroke="#c0c0c0" stroke-width="0.8"/><path d="M905.3 612.5V627.5" stroke="#c0c0c0" stroke-width="0.8"/><rect x="910.10" y="615.7" width="1.5" height="8.30" fill="#7f9c22"/><rect x="910.10" y="624.00" width="1.5" height="1.60" fill="#1f5f84"/><rect x="912.48" y="615.7" width="1.5" height="7.35" fill="#7f9c22"/><rect x="912.48" y="623.05" width="1.5" height="2.55" fill="#1f5f84"/><rect x="914.86" y="615.7" width="1.5" height="6.40" fill="#7f9c22"/><rect x="914.86" y="622.10" width="1.5" height="3.50" fill="#1f5f84"/><rect x="917.24" y="615.7" width="1.5" height="5.45" fill="#7f9c22"/><rect x="917.24" y="621.15" width="1.5" height="4.45" fill="#1f5f84"/><rect x="919.62" y="615.7" width="1.5" height="4.50" fill="#7f9c22"/><rect x="919.62" y="620.20" width="1.5" height="5.40" fill="#1f5f84"/><rect x="922.00" y="615.7" width="1.5" height="3.55" fill="#7f9c22"/><rect x="922.00" y="619.25" width="1.5" height="6.35" fill="#1f5f84"/><rect x="924.38" y="615.7" width="1.5" height="2.60" fill="#7f9c22"/><rect x="924.38" y="618.30" width="1.5" height="7.30" fill="#1f5f84"/><rect x="926.76" y="615.7" width="1.5" height="1.65" fill="#7f9c22"/><rect x="926.76" y="617.35" width="1.5" height="8.25" fill="#1f5f84"/></svg>
<span class="t" style="left:71.8px;top:5.43px;font-size:10.1px;line-height:14.14px;color:#000;font-weight:normal;"><i style="width:238.50px"><b style="transform:scaleX(0.9027)">: FXGiants-Real10 - Notesco (BVI) Limited - [AUDCAD,M5]</b></i></span>
<span class="t" style="left:23.8px;top:25.54px;font-size:9.8px;line-height:13.72px;color:#000;font-weight:normal;"><i style="font-size:10.4px;width:25.03px"><b style="transform:scaleX(0.6023)">ファイル</b></i><i style="width:14.17px"><b style="transform:scaleX(0.9300)"> (F)</b></i></span>
<span class="t" style="left:78.8px;top:25.54px;font-size:9.8px;line-height:13.72px;color:#000;font-weight:normal;"><i style="font-size:10.4px;width:17.32px"><b style="transform:scaleX(0.8336)">表示</b></i><i style="width:14.68px"><b style="transform:scaleX(0.9300)"> (V)</b></i></span>
<span class="t" style="left:126.3px;top:25.54px;font-size:9.8px;line-height:13.72px;color:#000;font-weight:normal;"><i style="font-size:10.4px;width:18.10px"><b style="transform:scaleX(0.8709)">挿入</b></i><i style="width:8.60px"><b style="transform:scaleX(0.9300)">(I)</b></i></span>
<span class="t" style="left:168.8px;top:25.54px;font-size:9.8px;line-height:13.72px;color:#000;font-weight:normal;"><i style="font-size:10.4px;width:23.51px"><b style="transform:scaleX(0.5670)">チャート</b></i><i style="width:15.19px"><b style="transform:scaleX(0.9300)"> (C)</b></i></span>
<span class="t" style="left:222.5px;top:25.54px;font-size:9.8px;line-height:13.72px;color:#000;font-weight:normal;"><i style="font-size:10.4px;width:21.83px"><b style="transform:scaleX(0.7004)">ツール</b></i><i style="width:14.17px"><b style="transform:scaleX(0.9300)"> (T)</b></i></span>
<span class="t" style="left:272.3px;top:25.54px;font-size:9.8px;line-height:13.72px;color:#000;font-weight:normal;"><i style="font-size:10.4px;width:32.80px"><b style="transform:scaleX(0.6312)">ウィンドウ</b></i><i style="width:17.21px"><b style="transform:scaleX(0.9300)"> (W)</b></i></span>
<span class="t" style="left:338px;top:25.54px;font-size:9.8px;line-height:13.72px;color:#000;font-weight:normal;"><i style="font-size:10.4px;width:22.31px"><b style="transform:scaleX(0.7159)">ヘルプ</b></i><i style="width:15.19px"><b style="transform:scaleX(0.9300)"> (H)</b></i></span>
<span class="t" style="left:206.4px;top:45.42px;font-size:9.4px;line-height:13.16px;color:#000;font-weight:500;"><i style="width:37.00px"><b style="transform:scaleX(0.9863)">新規注文</b></i></span>
<span class="t" style="left:337.6px;top:45.42px;font-size:9.4px;line-height:13.16px;color:#000;font-weight:500;"><i style="width:36.80px"><b style="transform:scaleX(0.9809)">自動売買</b></i></span>
<span class="t" style="left:253.3px;top:68.57px;font-size:7.9px;line-height:11.06px;color:#4a4a4a;font-weight:normal;"><i style="width:10.30px"><b style="transform:scaleX(0.9390)">M1</b></i></span>
<span class="t" style="left:275.6px;top:68.57px;font-size:7.9px;line-height:11.06px;color:#4a4a4a;font-weight:normal;"><i style="width:10.40px"><b style="transform:scaleX(0.9481)">M5</b></i></span>
<span class="t" style="left:296.5px;top:68.57px;font-size:7.9px;line-height:11.06px;color:#4a4a4a;font-weight:normal;"><i style="width:13.70px"><b style="transform:scaleX(0.8920)">M15</b></i></span>
<span class="t" style="left:318.7px;top:68.57px;font-size:7.9px;line-height:11.06px;color:#4a4a4a;font-weight:normal;"><i style="width:14.00px"><b style="transform:scaleX(0.9115)">M30</b></i></span>
<span class="t" style="left:343.1px;top:68.57px;font-size:7.9px;line-height:11.06px;color:#4a4a4a;font-weight:normal;"><i style="width:9.40px"><b style="transform:scaleX(0.9313)">H1</b></i></span>
<span class="t" style="left:365.2px;top:68.57px;font-size:7.9px;line-height:11.06px;color:#4a4a4a;font-weight:normal;"><i style="width:9.50px"><b style="transform:scaleX(0.9412)">H4</b></i></span>
<span class="t" style="left:388px;top:68.57px;font-size:7.9px;line-height:11.06px;color:#4a4a4a;font-weight:normal;"><i style="width:9.00px"><b style="transform:scaleX(0.8916)">D1</b></i></span>
<span class="t" style="left:409.9px;top:68.57px;font-size:7.9px;line-height:11.06px;color:#4a4a4a;font-weight:normal;"><i style="width:11.20px"><b style="transform:scaleX(0.9456)">W1</b></i></span>
<span class="t" style="left:430.9px;top:68.57px;font-size:7.9px;line-height:11.06px;color:#4a4a4a;font-weight:normal;"><i style="width:12.10px"><b style="transform:scaleX(0.9852)">MN</b></i></span>
<span class="t" style="left:18.9px;top:465.88px;font-size:9.6px;line-height:13.44px;color:#000;font-weight:normal;"><i style="width:37.20px"><b style="transform:scaleX(0.9694)">注文番号</b></i></span>
<span class="t" style="right:778.20px;top:465.88px;font-size:9.6px;line-height:13.44px;color:#000;font-weight:normal;"><i style="width:18.40px"><b style="transform:scaleX(0.9590)">時間</b></i></span>
<span class="t" style="right:710.20px;top:465.88px;font-size:9.6px;line-height:13.44px;color:#000;font-weight:normal;"><i style="width:37.00px"><b style="transform:scaleX(0.9642)">取引種別</b></i></span>
<span class="t" style="right:657.10px;top:465.88px;font-size:9.6px;line-height:13.44px;color:#000;font-weight:normal;"><i style="width:18.20px"><b style="transform:scaleX(0.9485)">数量</b></i></span>
<span class="t" style="right:587.90px;top:465.88px;font-size:9.6px;line-height:13.44px;color:#000;font-weight:normal;"><i style="width:34.50px"><b style="transform:scaleX(0.8990)">通貨ペア</b></i></span>
<span class="t" style="right:511.90px;top:465.88px;font-size:9.6px;line-height:13.44px;color:#000;font-weight:normal;"><i style="width:17.40px"><b style="transform:scaleX(0.9068)">価格</b></i></span>
<span class="t" style="right:435.40px;top:465.88px;font-size:9.6px;line-height:13.44px;color:#000;font-weight:normal;"><i style="width:46.95px"><b style="transform:scaleX(0.9787)">決済逆指値</b></i><i style="width:19.25px"><b style="transform:scaleX(0.9500)">(S/...</b></i></span>
<span class="t" style="right:359.40px;top:465.88px;font-size:9.6px;line-height:13.44px;color:#000;font-weight:normal;"><i style="width:37.74px"><b style="transform:scaleX(0.9834)">決済指値</b></i><i style="width:20.26px"><b style="transform:scaleX(0.9500)">(T/P)</b></i></span>
<span class="t" style="right:282.90px;top:465.88px;font-size:9.6px;line-height:13.44px;color:#000;font-weight:normal;"><i style="width:17.40px"><b style="transform:scaleX(0.9068)">価格</b></i></span>
<span class="t" style="right:206.60px;top:465.88px;font-size:9.6px;line-height:13.44px;color:#000;font-weight:normal;"><i style="width:27.30px"><b style="transform:scaleX(0.9485)">手数料</b></i></span>
<span class="t" style="right:130.20px;top:465.88px;font-size:9.6px;line-height:13.44px;color:#000;font-weight:normal;"><i style="width:27.00px"><b style="transform:scaleX(0.7036)">スワップ</b></i></span>
<span class="t" style="right:9.00px;top:465.88px;font-size:9.6px;line-height:13.44px;color:#000;font-weight:normal;"><i style="width:18.30px"><b style="transform:scaleX(0.9537)">損益</b></i></span>
<span class="t" style="right:776.10px;top:483.21px;font-size:9.7px;line-height:13.58px;color:#111;font-weight:normal;"><i style="width:78.67px"><b style="transform:scaleX(0.8850)">2025.12.05 17:51:00</b></i></span>
<span class="t" style="right:708.10px;top:483.21px;font-size:9.7px;line-height:13.58px;color:#111;font-weight:normal;"><i>buy</i></span>
<span class="t" style="right:655.00px;top:483.21px;font-size:9.7px;line-height:13.58px;color:#111;font-weight:normal;"><i style="width:16.69px"><b style="transform:scaleX(0.8850)">0.04</b></i></span>
<span class="t" style="right:585.80px;top:483.21px;font-size:9.7px;line-height:13.58px;color:#111;font-weight:normal;"><i>audcad</i></span>
<span class="t" style="right:509.80px;top:483.21px;font-size:9.7px;line-height:13.58px;color:#111;font-weight:normal;"><i style="width:31.00px"><b style="transform:scaleX(0.8850)">0.92054</b></i></span>
<span class="t" style="right:433.30px;top:483.21px;font-size:9.7px;line-height:13.58px;color:#111;font-weight:normal;"><i style="width:31.00px"><b style="transform:scaleX(0.8850)">0.00000</b></i></span>
<span class="t" style="right:357.30px;top:483.21px;font-size:9.7px;line-height:13.58px;color:#111;font-weight:normal;"><i style="width:31.00px"><b style="transform:scaleX(0.8850)">0.00000</b></i></span>
<span class="t" style="right:280.80px;top:483.21px;font-size:9.7px;line-height:13.58px;color:#111;font-weight:normal;"><i style="width:30.37px"><b style="transform:scaleX(0.8850)">0.91105</b></i></span>
<span class="t" style="right:204.50px;top:483.21px;font-size:9.7px;line-height:13.58px;color:#111;font-weight:normal;"><i style="width:12.40px"><b style="transform:scaleX(0.8850)">-66</b></i></span>
<span class="t" style="right:128.10px;top:483.21px;font-size:9.7px;line-height:13.58px;color:#111;font-weight:normal;"><i style="width:9.54px"><b style="transform:scaleX(0.8850)">28</b></i></span>
<span class="t" style="right:22.80px;top:483.21px;font-size:9.7px;line-height:13.58px;color:#111;font-weight:normal;"><i style="width:24.31px"><b style="transform:scaleX(0.8850)">-4 287</b></i></span>
<span class="t" style="right:776.10px;top:499.01px;font-size:9.7px;line-height:13.58px;color:#111;font-weight:normal;"><i style="width:78.67px"><b style="transform:scaleX(0.8850)">2025.12.16 00:15:00</b></i></span>
<span class="t" style="right:708.10px;top:499.01px;font-size:9.7px;line-height:13.58px;color:#111;font-weight:normal;"><i>buy</i></span>
<span class="t" style="right:655.00px;top:499.01px;font-size:9.7px;line-height:13.58px;color:#111;font-weight:normal;"><i style="width:16.69px"><b style="transform:scaleX(0.8850)">0.08</b></i></span>
<span class="t" style="right:585.80px;top:499.01px;font-size:9.7px;line-height:13.58px;color:#111;font-weight:normal;"><i>audcad</i></span>
<span class="t" style="right:509.80px;top:499.01px;font-size:9.7px;line-height:13.58px;color:#111;font-weight:normal;"><i style="width:31.00px"><b style="transform:scaleX(0.8850)">0.91475</b></i></span>
<span class="t" style="right:433.30px;top:499.01px;font-size:9.7px;line-height:13.58px;color:#111;font-weight:normal;"><i style="width:31.00px"><b style="transform:scaleX(0.8850)">0.00000</b></i></span>
<span class="t" style="right:357.30px;top:499.01px;font-size:9.7px;line-height:13.58px;color:#111;font-weight:normal;"><i style="width:31.00px"><b style="transform:scaleX(0.8850)">0.00000</b></i></span>
<span class="t" style="right:280.80px;top:499.01px;font-size:9.7px;line-height:13.58px;color:#111;font-weight:normal;"><i style="width:30.37px"><b style="transform:scaleX(0.8850)">0.91105</b></i></span>
<span class="t" style="right:204.50px;top:499.01px;font-size:9.7px;line-height:13.58px;color:#111;font-weight:normal;"><i style="width:17.16px"><b style="transform:scaleX(0.8850)">-152</b></i></span>
<span class="t" style="right:128.10px;top:499.01px;font-size:9.7px;line-height:13.58px;color:#111;font-weight:normal;"><i style="width:9.54px"><b style="transform:scaleX(0.8850)">20</b></i></span>
<span class="t" style="right:22.80px;top:499.01px;font-size:9.7px;line-height:13.58px;color:#111;font-weight:normal;"><i style="width:24.31px"><b style="transform:scaleX(0.8850)">-3 342</b></i></span>
<span class="t" style="left:31.4px;top:514.98px;font-size:9.6px;line-height:13.44px;color:#111;font-weight:bold;"><i style="font-weight:500;width:18.49px"><b style="transform:scaleX(0.9635)">残高</b></i><i style="width:65.17px"><b style="transform:scaleX(0.9800)">: 299 664 JPY  </b></i><i style="font-weight:500;width:46.22px"><b style="transform:scaleX(0.9635)">有効証拠金</b></i><i style="width:44.96px"><b style="transform:scaleX(0.9800)">: 291 865  </b></i><i style="font-weight:500;width:46.22px"><b style="transform:scaleX(0.9635)">必要証拠金</b></i><i style="width:34.50px"><b style="transform:scaleX(0.9800)">: 2 473  </b></i><i style="font-weight:500;width:46.22px"><b style="transform:scaleX(0.9635)">余剰証拠金</b></i><i style="width:44.96px"><b style="transform:scaleX(0.9800)">: 289 392  </b></i><i style="font-weight:500;width:55.46px"><b style="transform:scaleX(0.9635)">証拠金維持率</b></i><i style="width:52.81px"><b style="transform:scaleX(0.9800)">: 11800.65%</b></i></span>
<span class="t" style="right:23.40px;top:514.61px;font-size:9.7px;line-height:13.58px;color:#111;font-weight:normal;"><i style="width:24.31px"><b style="transform:scaleX(0.8850)">-7 799</b></i></span>
<span class="t" style="left:23.8px;top:591.28px;font-size:9.6px;line-height:13.44px;color:#000;font-weight:normal;"><i style="width:17.60px"><b style="transform:scaleX(0.9173)">取引</b></i></span>
<span class="t" style="left:58.8px;top:591.28px;font-size:9.6px;line-height:13.44px;color:#6e6e6e;font-weight:normal;"><i style="width:37.50px"><b style="transform:scaleX(0.9772)">運用比率</b></i></span>
<span class="t" style="left:112.5px;top:591.28px;font-size:9.6px;line-height:13.44px;color:#6e6e6e;font-weight:normal;"><i style="width:37.50px"><b style="transform:scaleX(0.9772)">口座履歴</b></i></span>
<span class="t" style="left:166px;top:591.28px;font-size:9.6px;line-height:13.44px;color:#6e6e6e;font-weight:normal;"><i style="width:28.00px"><b style="transform:scaleX(0.7387)">ニュース</b></i></span>
<span class="t" style="left:208.8px;top:591.28px;font-size:9.6px;line-height:13.44px;color:#6e6e6e;font-weight:normal;"><i style="width:46.20px"><b style="transform:scaleX(0.8065)">アラーム設定</b></i></span>
<span class="t" style="left:271.5px;top:591.28px;font-size:9.6px;line-height:13.44px;color:#6e6e6e;font-weight:normal;"><i style="width:48.50px"><b style="transform:scaleX(0.7252)">メールボックス</b></i></span>
<span class="t" style="left:346px;top:591.28px;font-size:9.6px;line-height:13.44px;color:#6e6e6e;font-weight:normal;"><i style="width:31.50px"><b style="transform:scaleX(0.6567)">マーケット</b></i></span>
<span class="t" style="left:407.5px;top:591.28px;font-size:9.6px;line-height:13.44px;color:#6e6e6e;font-weight:normal;"><i style="width:30.00px"><b style="transform:scaleX(0.7818)">シグナル</b></i></span>
<span class="t" style="left:454px;top:591.28px;font-size:9.6px;line-height:13.44px;color:#6e6e6e;font-weight:normal;"><i style="width:17.00px"><b style="transform:scaleX(0.8860)">記事</b></i></span>
<span class="t" style="left:489px;top:591.28px;font-size:9.6px;line-height:13.44px;color:#6e6e6e;font-weight:normal;"><i style="width:34.00px"><b style="transform:scaleX(0.7088)">ライブラリ</b></i></span>
<span class="t" style="left:538px;top:591.28px;font-size:9.6px;line-height:13.44px;color:#6e6e6e;font-weight:normal;"><i style="width:41.50px"><b style="transform:scaleX(0.7245)">エキスパート</b></i></span>
<span class="t" style="left:596px;top:591.28px;font-size:9.6px;line-height:13.44px;color:#6e6e6e;font-weight:normal;"><i>操作履歴</i></span>
<span class="t" style="left:322.4px;top:595.68px;font-size:6.6px;line-height:9.24px;color:#e02020;font-weight:bold;"><i style="width:7.60px"><b style="transform:scaleX(1.0349)">18</b></i></span>
<span class="t" style="left:380px;top:595.68px;font-size:6.6px;line-height:9.24px;color:#e02020;font-weight:bold;"><i style="width:11.20px"><b style="transform:scaleX(1.0167)">105</b></i></span>
<span class="t" style="left:2.6px;top:613.32px;font-size:10.4px;line-height:14.56px;color:#000;font-weight:normal;"><i style="width:10.68px"><b style="transform:scaleX(0.8800)">F1</b></i><i style="font-size:10.8px;width:99.32px"><b style="transform:scaleX(0.7108)">キーでヘルプが表示されます</b></i></span>
<span class="t" style="left:462.6px;top:613.76px;font-size:10.2px;line-height:14.28px;color:#000;font-weight:normal;"><i style="width:30.00px"><b style="transform:scaleX(0.9293)">Default</b></i></span>
<span class="t" style="left:932px;top:613.76px;font-size:10.2px;line-height:14.28px;color:#000;font-weight:normal;"><i style="width:72.50px"><b style="transform:scaleX(0.8826)">-1898953/1482 kb</b></i></span>
<div style="position:absolute;left:0px;top:0px;width:1024px;height:0.8px;background:#3a4656;"></div>
<div style="position:absolute;left:0px;top:0px;width:1.1px;height:630px;background:#26303e;"></div>
<div style="position:absolute;left:1022.9px;top:0px;width:1.1px;height:630px;background:#26303e;"></div>
<div style="position:absolute;left:0px;top:628.9px;width:1024px;height:1.1px;background:#26303e;"></div>
</body></html>
